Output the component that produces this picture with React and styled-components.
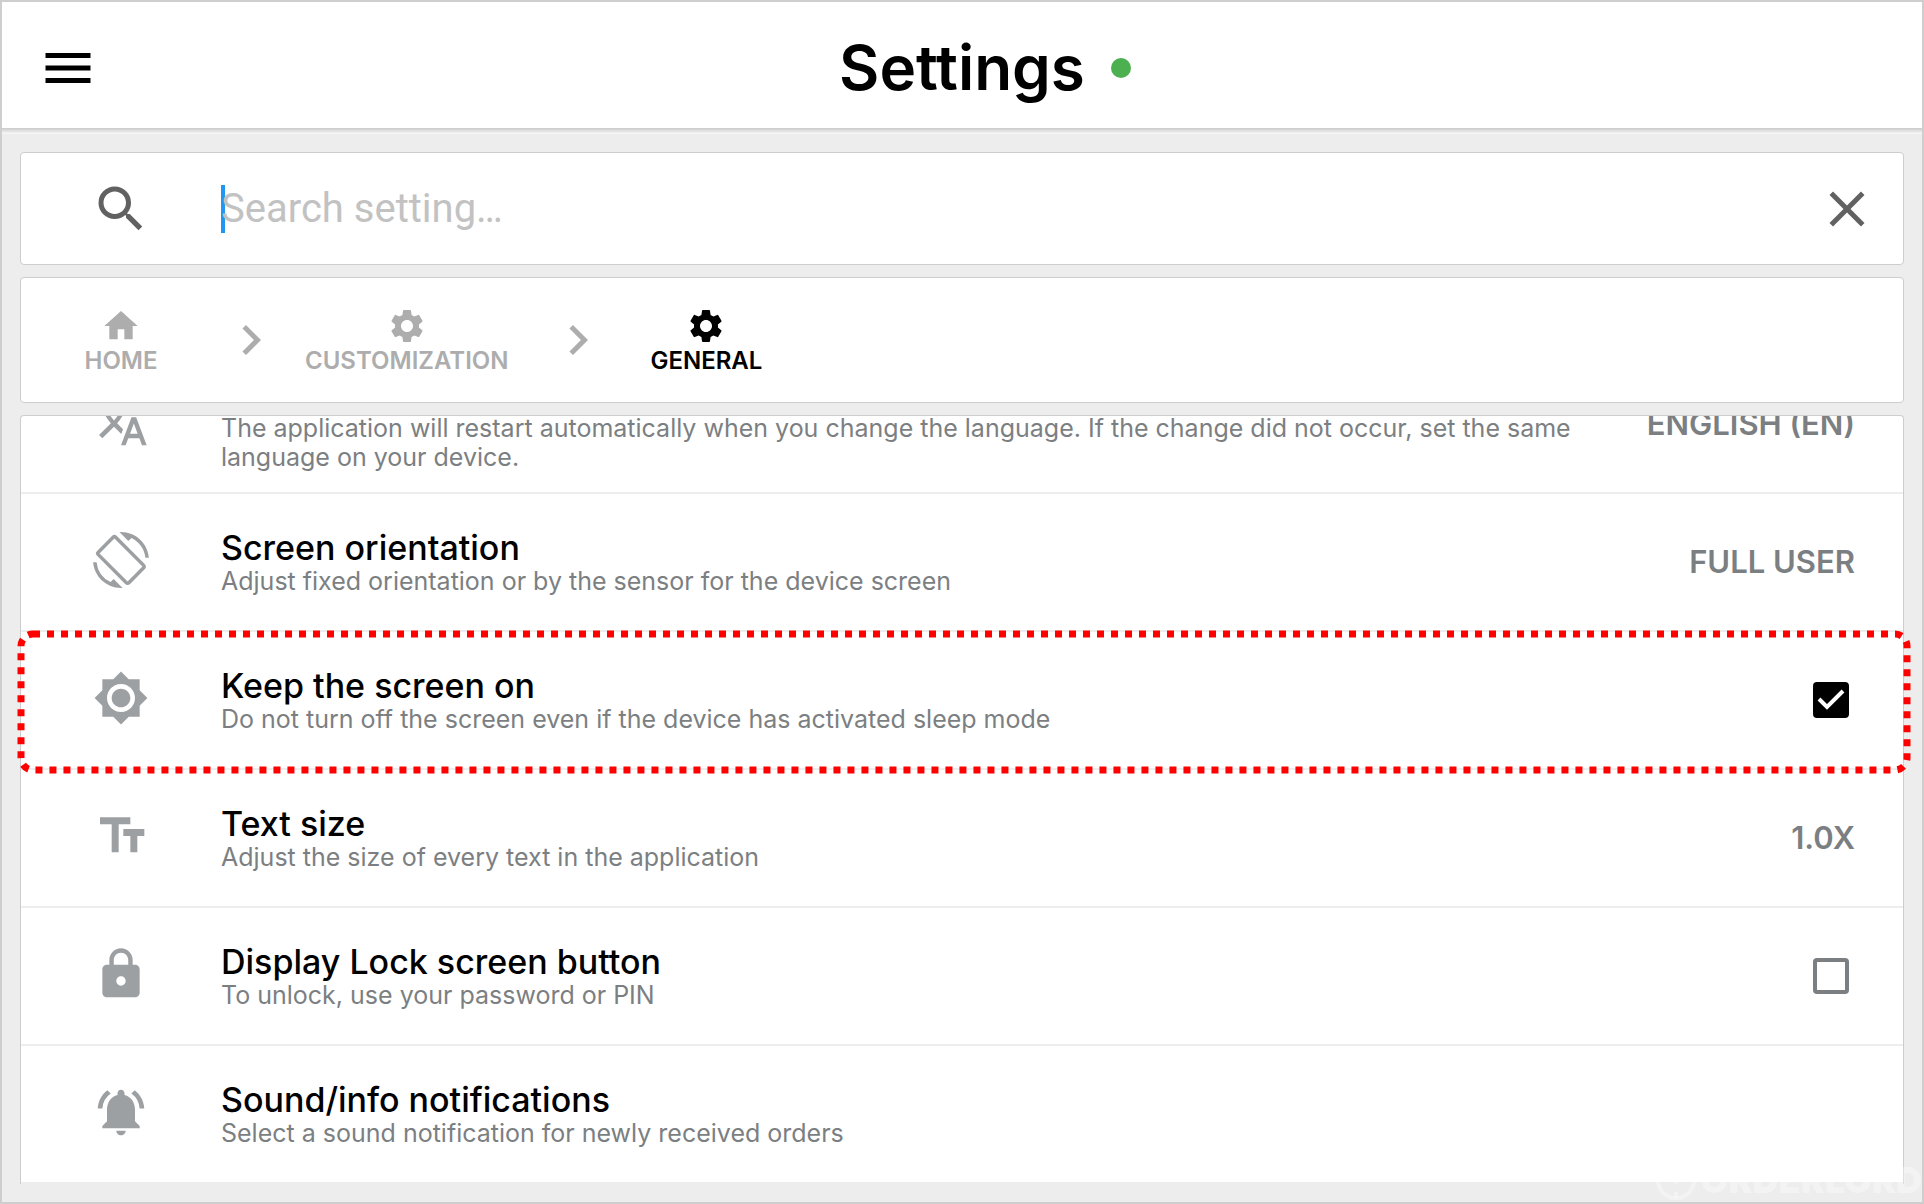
import React, { useState } from "react";
import styled, { createGlobalStyle } from "styled-components";
import {
  MdMenu,
  MdSearch,
  MdClose,
  MdHome,
  MdSettings,
  MdChevronRight,
  MdTranslate,
  MdScreenRotation,
  MdBrightness7,
  MdLock,
  MdNotificationsActive,
} from "react-icons/md";

const GlobalStyle = createGlobalStyle`
  *, *::before, *::after { box-sizing: border-box; }
  body {
    margin: 0;
    background: #ededed;
    color: #000;
    font-family: "Inter", "Liberation Sans", sans-serif;
  }
  button, input { font: inherit; }
`;

const Page = styled.div`
  position: relative;
  display: flex;
  flex-direction: column;
  min-height: 100vh;
  border: 2px solid #cecece;
  background: #ededed;
`;

const Header = styled.header`
  display: grid;
  grid-template-columns: 1fr auto 1fr;
  align-items: center;
  min-height: 132px;
  padding: 0 36px;
  background: linear-gradient(#cacaca, #fafafa) bottom / 100% 6px no-repeat, #fff;
`;

const IconButton = styled.button`
  display: flex;
  justify-self: start;
  padding: 0;
  border: 0;
  background: none;
  color: ${(p) => p.$color};
  font-size: 60px;
  cursor: pointer;
`;

const Title = styled.h1`
  margin: 0;
  font-size: 62px;
  line-height: 72px;
  font-weight: 600;
`;

const StatusDot = styled.span`
  width: 20px;
  height: 20px;
  margin-left: 26px;
  border-radius: 50%;
  background: #4caf50;
`;

const Main = styled.main`
  display: flex;
  flex-direction: column;
  gap: 12px;
  padding: 18px;
`;

const card = `
  border: 1px solid #cdcdcd;
  border-radius: 4px;
  background: #fff;
`;

const SearchBar = styled.form`
  ${card}
  display: flex;
  align-items: center;
  padding: 26px 26px 25px 0;
`;

const IconColumn = styled.span`
  display: flex;
  flex: 0 0 200px;
  justify-content: center;
  color: ${(p) => p.$color};
  font-size: ${(p) => p.$size}px;
`;

const Caret = styled.span`
  width: 4px;
  height: 48px;
  background: #2196f3;
`;

const SearchInput = styled.input`
  flex: 1;
  min-width: 0;
  margin-left: -4px;
  padding: 0;
  border: 0;
  outline: 0;
  background: none;
  color: #000;
  font-family: "Roboto", sans-serif;
  font-size: 40px;
  line-height: 48px;
  &::placeholder { color: #c2c2c2; opacity: 1; }
`;

const Breadcrumbs = styled.nav`
  ${card}
  display: flex;
  align-items: center;
  min-height: 126px;
`;

const Crumb = styled.a`
  display: flex;
  flex-direction: column;
  align-items: center;
  min-width: ${(p) => (p.$first ? 200 : 0)}px;
  padding: ${(p) => p.$padding || "0"};
  color: ${(p) => (p.$active ? "#000" : "#adadad")};
  font-size: 24px;
  line-height: 29px;
  font-weight: 600;
  text-decoration: none;
  svg { width: 40px; height: 40px; }
`;

const Chevron = styled(MdChevronRight)`
  flex: none;
  width: 60px;
  height: 60px;
  color: #adadad;
`;

const List = styled.ul`
  ${card}
  margin: 0;
  padding: 0;
  border-bottom: 0;
  border-radius: 4px 4px 0 0;
  list-style: none;
`;

const Row = styled.li`
  position: relative;
  display: flex;
  align-items: center;
  height: ${(p) => (p.$scrolled ? "78px" : "auto")};
  min-height: ${(p) => (p.$scrolled ? 0 : 138)}px;
  overflow: ${(p) => (p.$scrolled ? "hidden" : "visible")};
  border-bottom: 2px solid #ededed;
`;

const RowBody = styled.div`
  display: flex;
  flex: 1;
  align-items: center;
  align-self: flex-end;
  min-height: 136px;
  padding-right: 48px;
`;

const RowIcon = styled(IconColumn)`
  padding-bottom: 4px;
`;

const RowText = styled.div`
  flex: 1;
  max-width: 1400px;
  margin-right: auto;
  padding-top: ${(p) => (p.$untitled ? 38 : 0)}px;
`;

const RowTitle = styled.label`
  display: block;
  font-size: 34px;
  line-height: 38px;
  font-weight: 500;
`;

const RowDescription = styled.p`
  margin: 0;
  color: #7c7f82;
  font-size: 25px;
  line-height: 29px;
`;

const Value = styled.button`
  margin-left: auto;
  padding: 0;
  border: 0;
  background: none;
  color: #7c7f82;
  font-size: 31px;
  line-height: 36px;
  font-weight: 600;
  white-space: nowrap;
`;

const Tick = styled.span`
  display: grid;
  margin: 0 6px;
  input, svg { grid-area: 1 / 1; }
  svg { pointer-events: none; }
`;

const Checkbox = styled.input`
  appearance: none;
  width: 36px;
  height: 36px;
  margin: 0;
  border: 4px solid #7c7f82;
  border-radius: 4px;
  background: #fff;
  &:checked { border-color: #000; background: #000; }
`;

const Highlight = styled.svg`
  position: absolute;
  top: 2px;
  left: 0;
  width: calc(100% + 4px);
  height: 136px;
  overflow: visible;
  pointer-events: none;
`;

const Watermark = styled.div`
  position: absolute;
  right: 0;
  bottom: 2px;
  display: flex;
  align-items: center;
  gap: 5px;
  color: rgba(255, 255, 255, 0.35);
  font-size: 36px;
  line-height: 40px;
  font-weight: 900;
`;

function TextSizeIcon() {
  return (
    <svg width="1em" height="1em" viewBox="0 0 24 24" fill="currentColor" aria-hidden="true">
      <path d="M3 4v3h5v12h3V7h5V4H3zM13 9v3h3v7h3v-7h3V9h-9z" />
    </svg>
  );
}

const settings = [
  {
    id: "language",
    icon: MdTranslate,
    text: "The application will restart automatically when you change the language. If the change did not occur, set the same language on your device.",
    value: "ENGLISH (EN)",
    scrolled: true,
  },
  {
    id: "orientation",
    icon: MdScreenRotation,
    title: "Screen orientation",
    text: "Adjust fixed orientation or by the sensor for the device screen",
    value: "FULL USER",
  },
  {
    id: "keep-on",
    icon: MdBrightness7,
    title: "Keep the screen on",
    text: "Do not turn off the screen even if the device has activated sleep mode",
    checkbox: true,
    checked: true,
    highlighted: true,
  },
  {
    id: "text-size",
    icon: TextSizeIcon,
    title: "Text size",
    text: "Adjust the size of every text in the application",
    value: "1.0X",
  },
  {
    id: "lock",
    icon: MdLock,
    title: "Display Lock screen button",
    text: "To unlock, use your password or PIN",
    checkbox: true,
  },
  {
    id: "sound",
    icon: MdNotificationsActive,
    title: "Sound/info notifications",
    text: "Select a sound notification for newly received orders",
  },
];

function SettingCheckbox({ id, initial }) {
  const [checked, setChecked] = useState(Boolean(initial));
  return (
    <Tick>
      <Checkbox id={id} type="checkbox" checked={checked} onChange={(e) => setChecked(e.target.checked)} />
      {checked && (
        <svg width="36" height="36" viewBox="0 0 36 36" fill="none" stroke="#fff" strokeWidth="4" aria-hidden="true">
          <path d="M6 17l8 8L30 9" />
        </svg>
      )}
    </Tick>
  );
}

function Setting({ item }) {
  const Icon = item.icon;
  return (
    <Row $scrolled={item.scrolled}>
      <RowBody>
        <RowIcon $color="#9da0a2" $size={56}>
          <Icon />
        </RowIcon>
        <RowText $untitled={!item.title}>
          {item.title && (
            <RowTitle as={item.checkbox ? "label" : "div"} htmlFor={item.checkbox ? item.id : undefined}>
              {item.title}
            </RowTitle>
          )}
          <RowDescription>{item.text}</RowDescription>
        </RowText>
        {item.value && <Value type="button">{item.value}</Value>}
        {item.checkbox && <SettingCheckbox id={item.id} initial={item.checked} />}
      </RowBody>
      {item.highlighted && (
        <Highlight aria-hidden="true">
          <rect width="100%" height="100%" rx="12" fill="none" stroke="#f00" strokeWidth="7" strokeDasharray="7 7" />
        </Highlight>
      )}
    </Row>
  );
}

export default function App() {
  return (
    <>
      <GlobalStyle />
      <Page>
        <Header>
          <IconButton type="button" aria-label="Menu" $color="#000">
            <MdMenu />
          </IconButton>
          <Title>Settings</Title>
          <StatusDot />
        </Header>
        <Main>
          <SearchBar role="search" onSubmit={(e) => e.preventDefault()}>
            <IconColumn $color="#616161" $size={60}>
              <MdSearch />
            </IconColumn>
            <Caret />
            <SearchInput type="text" aria-label="Search setting" placeholder="Search setting…" />
            <IconButton type="button" aria-label="Clear search" $color="#616161">
              <MdClose />
            </IconButton>
          </SearchBar>
          <Breadcrumbs aria-label="Breadcrumb">
            <Crumb href="#home" $first>
              <MdHome />
              HOME
            </Crumb>
            <Chevron />
            <Crumb href="#customization" $padding="0 40px 0 24px">
              <MdSettings />
              CUSTOMIZATION
            </Crumb>
            <Chevron />
            <Crumb href="#general" $padding="0 42px" $active aria-current="page">
              <MdSettings />
              GENERAL
            </Crumb>
          </Breadcrumbs>
          <List>
            {settings.map((item) => (
              <Setting key={item.id} item={item} />
            ))}
          </List>
        </Main>
        <Watermark>
          <svg width="40" height="40" viewBox="0 0 40 40" fill="none" stroke="currentColor" strokeWidth="4" aria-hidden="true">
            <circle cx="20" cy="20" r="18" />
            <path d="M20 2v6M20 32v6M12 15l8 7 10-8" />
          </svg>
          ORDERLORD
        </Watermark>
      </Page>
    </>
  );
}
